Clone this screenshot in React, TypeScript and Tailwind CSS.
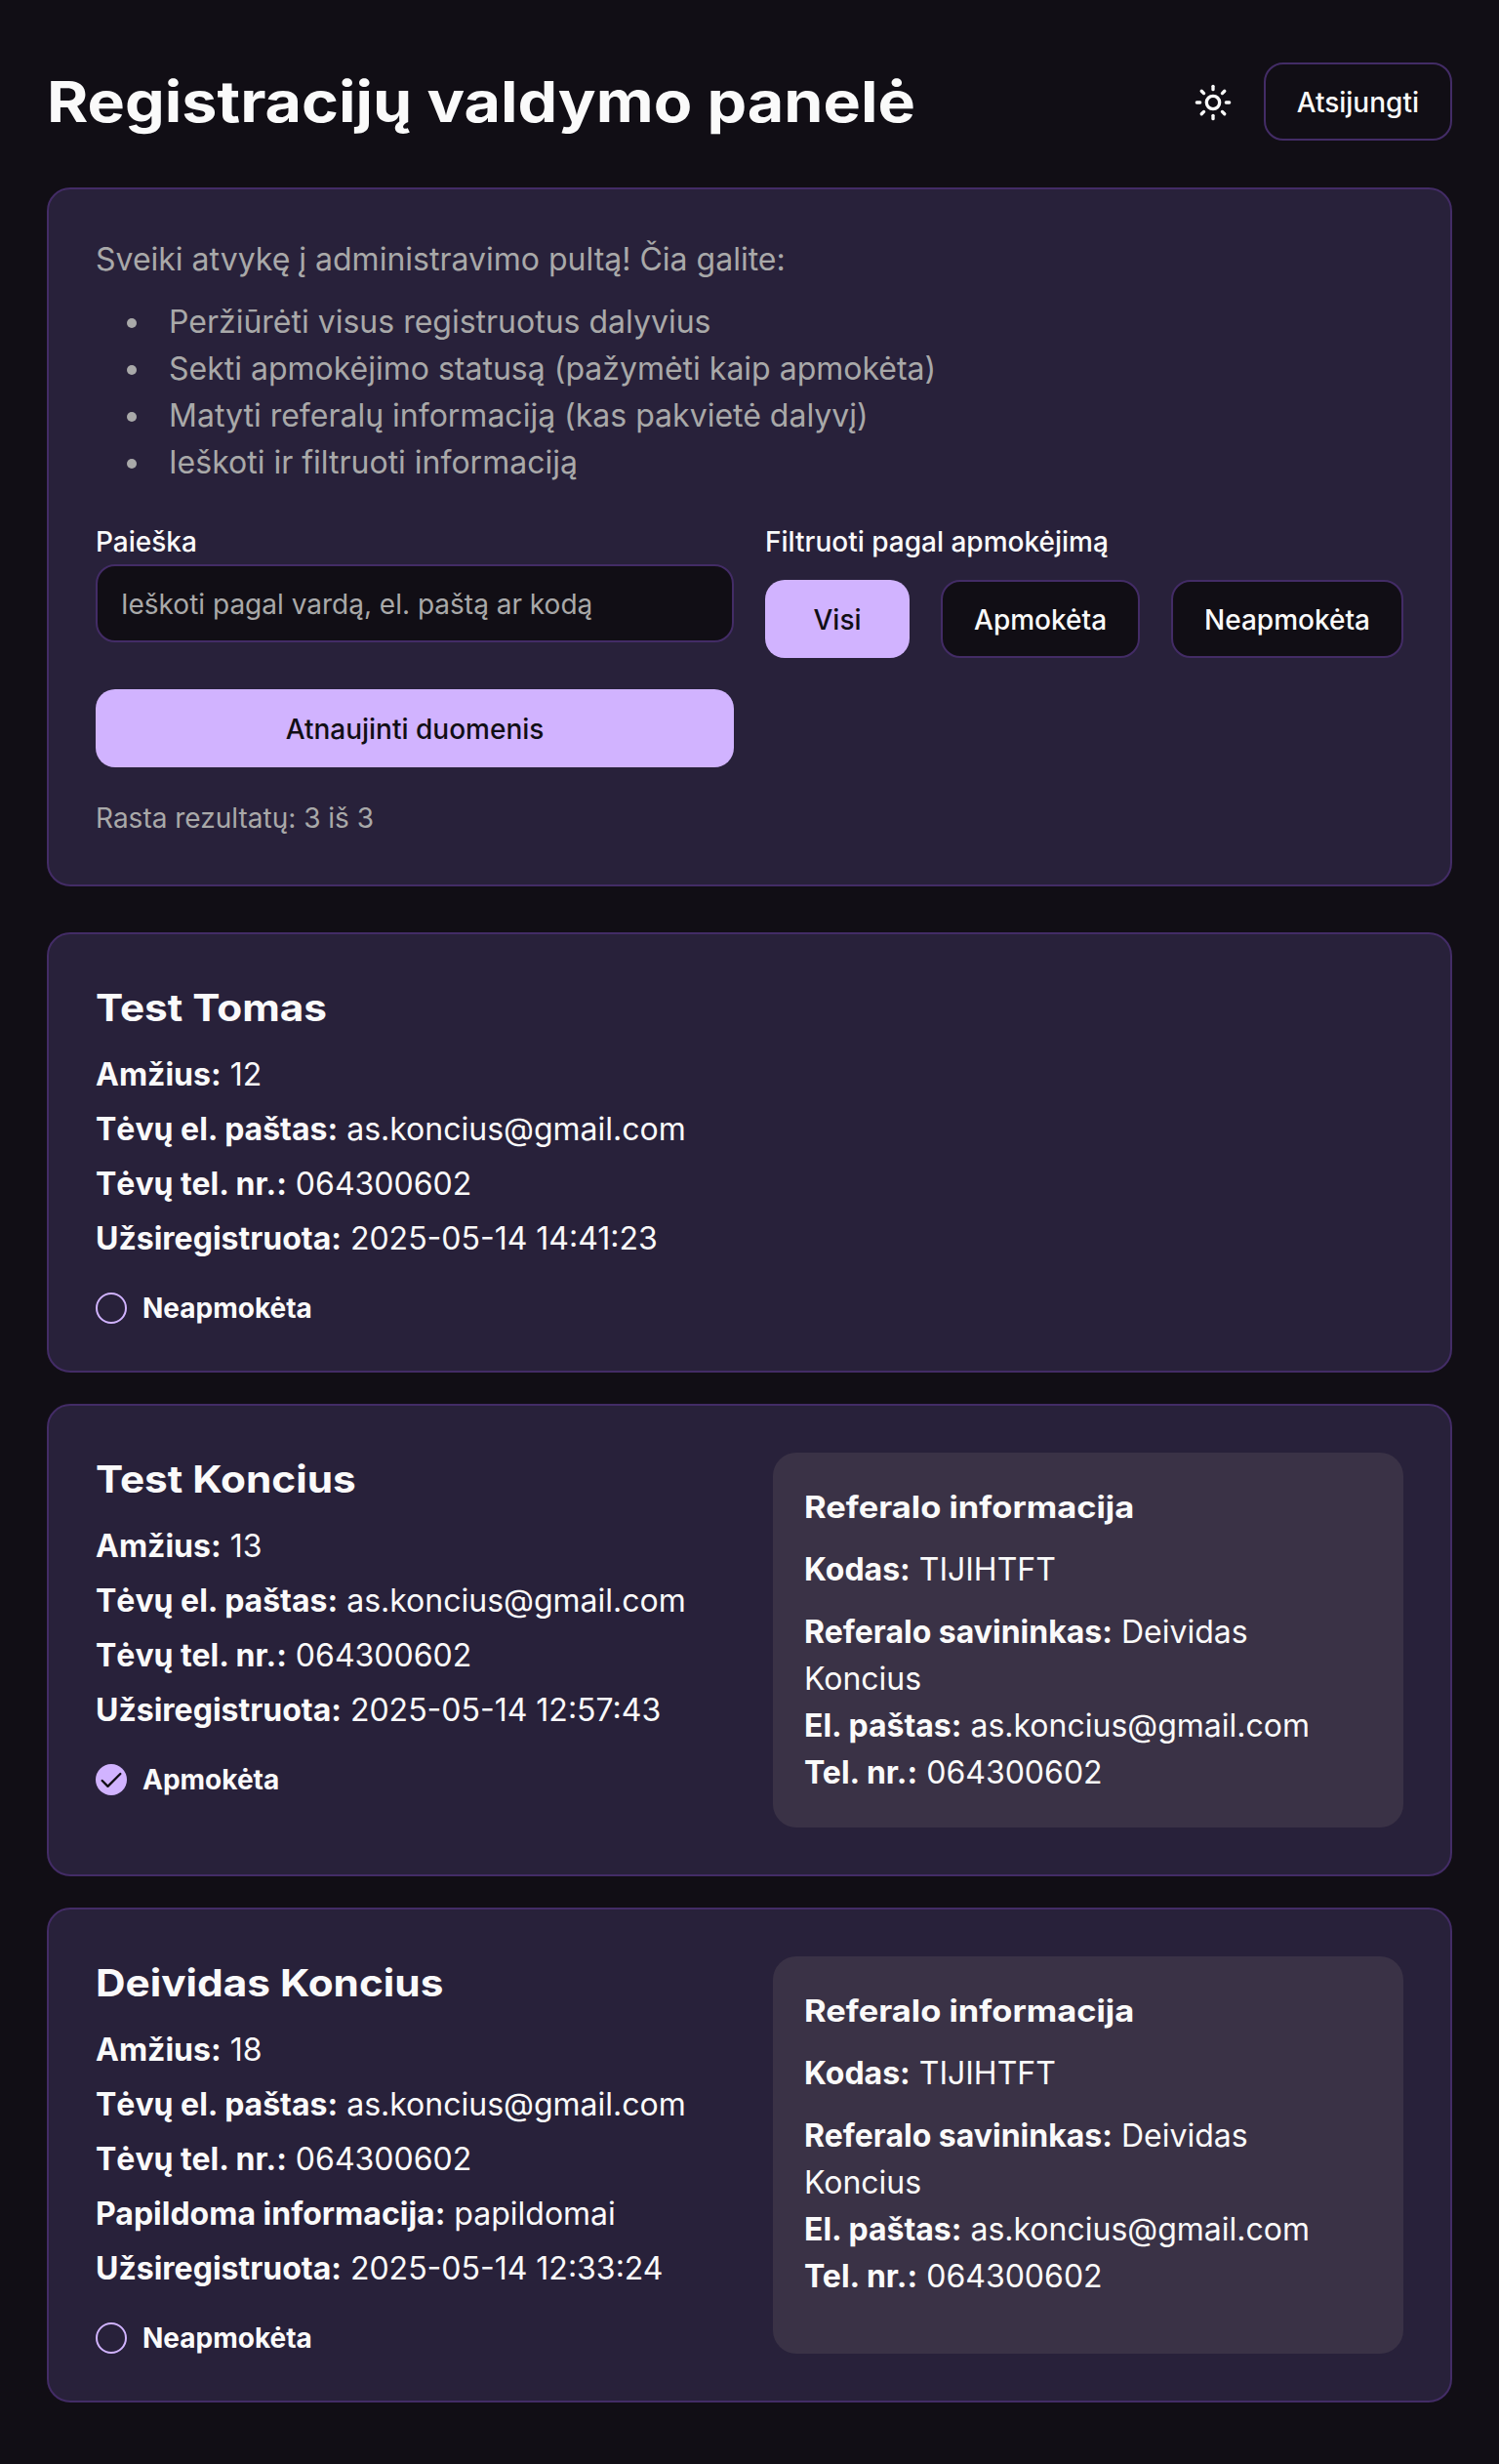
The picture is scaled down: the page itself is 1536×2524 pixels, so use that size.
import { Check, Sun } from "lucide-react";

type Referral = { code: string; owner: [string, string]; email: string; phone: string };
type Person = { name: string; rows: [string, string][]; paid: boolean; referral?: Referral };

const referral: Referral = {
  code: "TIJIHTFT",
  owner: ["Deividas", "Koncius"],
  email: "as.koncius@gmail.com",
  phone: "064300602",
};

const people: Person[] = [
  {
    name: "Test Tomas",
    rows: [
      ["Amžius:", "12"],
      ["Tėvų el. paštas:", "as.koncius@gmail.com"],
      ["Tėvų tel. nr.:", "064300602"],
      ["Užsiregistruota:", "2025-05-14 14:41:23"],
    ],
    paid: false,
  },
  {
    name: "Test Koncius",
    rows: [
      ["Amžius:", "13"],
      ["Tėvų el. paštas:", "as.koncius@gmail.com"],
      ["Tėvų tel. nr.:", "064300602"],
      ["Užsiregistruota:", "2025-05-14 12:57:43"],
    ],
    paid: true,
    referral,
  },
  {
    name: "Deividas Koncius",
    rows: [
      ["Amžius:", "18"],
      ["Tėvų el. paštas:", "as.koncius@gmail.com"],
      ["Tėvų tel. nr.:", "064300602"],
      ["Papildoma informacija:", "papildomai"],
      ["Užsiregistruota:", "2025-05-14 12:33:24"],
    ],
    paid: false,
    referral,
  },
];

const features = [
  "Peržiūrėti visus registruotus dalyvius",
  "Sekti apmokėjimo statusą (pažymėti kaip apmokėta)",
  "Matyti referalų informaciją (kas pakvietė dalyvį)",
  "Ieškoti ir filtruoti informaciją",
];

const card = "rounded-[24px] border-2 border-[#432c66] bg-[#28213a] p-12";
const outlineButton =
  "h-20 rounded-[20px] border-2 border-[#432c66] bg-[#110e15] px-8 pt-[2px] text-[28px] leading-10 font-medium whitespace-nowrap";
const solidButton =
  "h-20 rounded-[20px] bg-[#d1b3ff] pt-[2px] text-[28px] leading-10 font-medium text-[#110e15]";

function PaymentStatus({ paid }: { paid: boolean }) {
  return (
    <label className="mt-[31px] flex h-8 items-center gap-4 text-[28px] leading-none font-bold">
      <button
        className={
          paid
            ? "flex size-8 items-center justify-center rounded-full bg-[#d1b3ff] text-[#110e15]"
            : "size-8 rounded-full border-2 border-[#d1b3ff]"
        }
      >
        {paid && <Check size={28} className="mt-[2px]" />}
      </button>
      {paid ? "Apmokėta" : "Neapmokėta"}
    </label>
  );
}

/* Row label; the first word is set without kerning. */
function Label({ text }: { text: string }) {
  const space = text.indexOf(" ");
  if (!text.startsWith("Tėvų")) return <b className="font-bold">{text}</b>;
  return (
    <b className="font-bold">
      <span className="[font-kerning:none]">{text.slice(0, space)}</span>
      {text.slice(space)}
    </b>
  );
}

function ReferralBox({ data }: { data: Referral }) {
  return (
    <div className="rounded-[24px] bg-[#3a3246] p-8">
      <h4 className="origin-left scale-x-[1.112] text-[31px] leading-[48px] font-bold">Referalo informacija</h4>
      <p className="mt-4">
        <b className="font-bold">Kodas:</b> {data.code}
      </p>
      <div className="mt-4">
        <p>
          <b className="font-bold">Referalo savininkas:</b> {data.owner[0]}
          <br />
          {data.owner[1]}
        </p>
        <p>
          <b className="font-bold">El. paštas:</b> {data.email}
        </p>
        <p>
          <b className="font-bold">Tel. nr.:</b> {data.phone}
        </p>
      </div>
    </div>
  );
}

function PersonCard({ person }: { person: Person }) {
  return (
    <article className={card}>
      <div className="grid grid-cols-2 gap-12">
        <div>
          <h3 className="origin-left scale-x-[1.113] text-[38px] leading-[54px] font-bold">{person.name}</h3>
          <div className="mt-[18px] flex flex-col gap-2">
            {person.rows.map(([label, value]) => (
              <p key={label}>
                <Label text={label} /> {value}
              </p>
            ))}
          </div>
          <PaymentStatus paid={person.paid} />
        </div>
        {person.referral && <ReferralBox data={person.referral} />}
      </div>
    </article>
  );
}

export default function App() {
  return (
    <main className="h-[2524px] overflow-hidden bg-[#110e15] px-12 pt-16 font-['Inter',sans-serif] text-[32px] leading-[48px] text-[#fafafa]">
      <header className="mb-12 flex h-20 items-center justify-between">
        <h1 className="origin-left scale-x-[1.113] text-[58px] leading-[72px] font-bold">
          Registracijų valdymo panelė
        </h1>
        <div className="flex items-center gap-8">
          <button aria-label="Tema" className="pt-px">
            <Sun size={40} />
          </button>
          <button className={outlineButton}>Atsijungti</button>
        </div>
      </header>

      <section className={`${card} mb-[47.4px]`}>
        <div className="mb-8 text-[#a9a9a9]">
          <p className="mb-4">Sveiki atvykę į administravimo pultą! Čia galite:</p>
          <ul className="ml-8">
            {features.map((text) => (
              <li key={text} className="flex items-center gap-[33px]">
                <span className="mt-[2px] size-[10px] rounded-full bg-[#a9a9a9]" />
                {text}
              </li>
            ))}
          </ul>
        </div>
        <div className="grid grid-cols-2 gap-8">
          <div>
            <label className="block h-12 pt-px text-[28px] font-medium">Paieška</label>
            <input
              className="block h-20 w-full rounded-[20px] border-2 border-[#432c66] bg-[#110e15] px-6 pt-[2px] text-[28px] leading-10 placeholder:text-[#a9a9a9]"
              placeholder="Ieškoti pagal vardą, el. paštą ar kodą"
            />
          </div>
          <div>
            <label className="block h-12 pt-px text-[28px] font-medium">Filtruoti pagal apmokėjimą</label>
            <div className="mt-4 flex gap-8">
              <button className={`${solidButton} flex-1 px-8`}>Visi</button>
              <button className={`${outlineButton} flex-1`}>Apmokėta</button>
              <button className={`${outlineButton} flex-1`}>Neapmokėta</button>
            </div>
          </div>
          <button className={solidButton}>Atnaujinti duomenis</button>
        </div>
        <p className="mt-8 text-[28px] leading-10 text-[#a9a9a9]">Rasta rezultatų: 3 iš 3</p>
      </section>

      <div className="flex flex-col gap-8">
        {people.map((person) => (
          <PersonCard key={person.name} person={person} />
        ))}
      </div>
    </main>
  );
}
